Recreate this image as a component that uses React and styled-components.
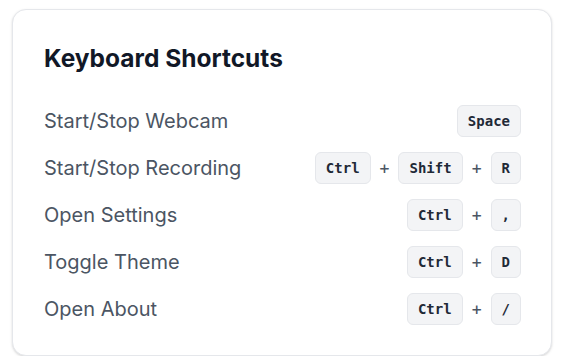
import React from 'react';
import styled, { createGlobalStyle } from 'styled-components';

const GlobalStyle = createGlobalStyle`
	* { box-sizing: border-box; }
	body {
		margin: 0;
		background: #ffffff;
		font-family: Inter, 'Liberation Sans', sans-serif;
	}
`;

const Page = styled.div`
	padding: 9px 10px 0 12px;
`;

const Card = styled.div`
	width: 540px;
	height: 347px;
	background: #ffffff;
	border: 1px solid #e5e7eb;
	border-radius: 14px;
	box-shadow: 0 1px 3px rgba(0, 0, 0, 0.1), 0 1px 2px rgba(0, 0, 0, 0.06);
	padding: 32px 30px 0 31px;
`;

const Title = styled.h2`
	margin: 0 0 23px;
	font-size: 24.5px;
	font-weight: 700;
	color: #111827;
	line-height: 32px;
`;

const List = styled.div`
	display: flex;
	flex-direction: column;
`;

const Row = styled.div`
	display: flex;
	align-items: center;
	justify-content: space-between;
	height: 47px;
`;

const Label = styled.span`
	font-size: 20px;
	color: #4b5563;
`;

const Combo = styled.div`
	display: flex;
	align-items: center;
	gap: 8px;
`;

const Key = styled.kbd`
	display: inline-flex;
	align-items: center;
	justify-content: center;
	height: 32px;
	padding: 0 10px;
	background: #f3f4f6;
	border: 1px solid #e5e7eb;
	border-radius: 6px;
	font-family: 'DejaVu Sans Mono', 'Liberation Mono', monospace;
	font-size: 14px;
	font-weight: 700;
	color: #1f2937;
`;

const Plus = styled.span`
	font-size: 18px;
	line-height: 1;
	color: #4b5563;
`;

const shortcuts = [
	{ label: 'Start/Stop Webcam', keys: ['Space'] },
	{ label: 'Start/Stop Recording', keys: ['Ctrl', 'Shift', 'R'] },
	{ label: 'Open Settings', keys: ['Ctrl', ','] },
	{ label: 'Toggle Theme', keys: ['Ctrl', 'D'] },
	{ label: 'Open About', keys: ['Ctrl', '/'] },
];

const App = () => (
	<Page>
		<GlobalStyle />
		<Card>
			<Title>Keyboard Shortcuts</Title>
			<List>
				{shortcuts.map((s) => (
					<Row key={s.label}>
						<Label>{s.label}</Label>
						<Combo>
							{s.keys.map((k, i) => (
								<React.Fragment key={k}>
									{i > 0 && <Plus>+</Plus>}
									<Key>{k}</Key>
								</React.Fragment>
							))}
						</Combo>
					</Row>
				))}
			</List>
		</Card>
	</Page>
);

export default App;
